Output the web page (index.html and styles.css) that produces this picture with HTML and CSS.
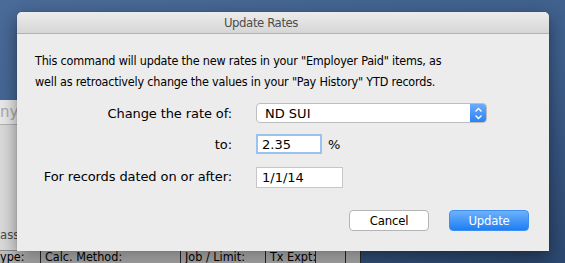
FILE: index.html
```html
<!DOCTYPE html>
<html>
<head>
  <title>Update Rates</title>
  <link rel="stylesheet" href="styles.css">
</head>
<body>
  <div class="desktop">
    <div class="back-window">
      <div class="search-row">
        <span class="search-hint">ny</span>
      </div>
      <div class="back-body">
        <span class="back-label">ass</span>
      </div>
      <div class="header-row">
        <div class="col col-first">ype:</div>
        <div class="col">Calc. Method:</div>
        <div class="col">Job / Limit:</div>
        <div class="col">Tx Expt:</div>
        <div class="col"></div>
        <div class="col"></div>
      </div>
    </div>

    <div class="dialog">
      <div class="titlebar">Update Rates</div>
      <div class="dialog-body">
        <p class="message">This command will update the new rates in your "Employer Paid" items, as<br>
          well as retroactively change the values in your "Pay History" YTD records.</p>

        <div class="form">
          <label for="rateItem">Change the rate of:</label>
          <div class="select-box" id="rateItem">
            <span class="select-value">ND SUI</span>
            <span class="select-arrows">
              <svg width="9" height="13" viewBox="0 0 9 13">
                <path d="M1.5 4.5 L4.5 1.5 L7.5 4.5 M1.5 8.5 L4.5 11.5 L7.5 8.5" fill="none" stroke="#fff" stroke-width="1.3"/>
              </svg>
            </span>
          </div>

          <label for="newRate">to:</label>
          <div class="field-row">
            <input class="text-field rate-field focused" id="newRate" value="2.35">
            <span class="unit">%</span>
          </div>

          <label for="fromDate">For records dated on or after:</label>
          <div class="field-row">
            <input class="text-field date-field" id="fromDate" value="1/1/14">
          </div>
        </div>

        <div class="buttons">
          <button class="btn">Cancel</button>
          <button class="btn btn-default">Update</button>
        </div>
      </div>
    </div>
  </div>
</body>
</html>
```

FILE: styles.css
```css
body {
  margin: 0;
  padding: 0;
  font-family: 'DejaVu Sans', sans-serif;
  font-size: 13px;
  color: #000;
}

.desktop {
  position: relative;
  width: 565px;
  height: 263px;
  overflow: hidden;
  background: linear-gradient(160deg, #4a6b98 0%, #3e5f8c 55%, #2c4870 100%);
}

/* window sitting behind the sheet */
.back-window {
  position: absolute;
  left: 0;
  top: 100px;
  width: 361px;
  height: 163px;
  display: flex;
  flex-direction: column;
  background: #e6e6e6;
}

.search-row {
  height: 24px;
  border-bottom: 1px solid #b4b4b4;
  background: #e9e9e9;
}

.search-hint {
  font-size: 15px;
  line-height: 24px;
  color: #a9a9a9;
}

.back-body {
  flex: 1;
  background: linear-gradient(90deg, #dadada, #c9c9c9);
  display: flex;
  align-items: flex-end;
}

.back-label {
  margin-bottom: 8px;
  font-family: 'DejaVu Sans Condensed', 'DejaVu Sans', sans-serif;
  font-size: 13px;
  color: #4a4a4a;
}

.header-row {
  height: 12px;
  display: grid;
  grid-template-columns: 41px 140px 85px 50px 30px 15px;
  background: linear-gradient(#c4c4c4, #a9a9a9);
  border-top: 1px solid #8a8a8a;
}

.col {
  border-right: 1px solid #2a2a2a;
  padding-left: 4px;
  font-family: 'DejaVu Sans Condensed', 'DejaVu Sans', sans-serif;
  font-size: 12.5px;
  line-height: 12px;
  white-space: nowrap;
}

.col-first {
  padding-left: 0;
}

/* the sheet */
.dialog {
  position: absolute;
  left: 17px;
  top: 12px;
  width: 532px;
  height: 239px;
  display: flex;
  flex-direction: column;
  background: #ececec;
  border-radius: 5px 5px 0 0;
  box-shadow: 0 6px 18px rgba(0, 0, 0, 0.45), 0 0 1px rgba(0, 0, 0, 0.4);
}

.titlebar {
  height: 21px;
  line-height: 21px;
  padding-right: 44px;
  text-align: center;
  font-family: 'DejaVu Sans Condensed', 'DejaVu Sans', sans-serif;
  font-size: 13px;
  letter-spacing: -0.4px;
  color: #4d4d4d;
  background: linear-gradient(#ececec, #d6d6d6);
  border-bottom: 1px solid #b1b1b1;
  border-radius: 5px 5px 0 0;
}

.dialog-body {
  padding: 16px 20px 20px 18px;
}

.message {
  margin: 0;
  font-family: 'DejaVu Sans Condensed', 'DejaVu Sans', sans-serif;
  font-size: 12.5px;
  letter-spacing: -0.2px;
  line-height: 21px;
  white-space: nowrap;
}

.form {
  display: grid;
  grid-template-columns: 197px auto;
  column-gap: 24px;
  row-gap: 11px;
  align-items: center;
  margin-top: 11px;
}

.form label {
  text-align: right;
  letter-spacing: -0.1px;
}

.select-box {
  width: 229px;
  height: 18px;
  display: flex;
  background: #fff;
  border: 1px solid #bdbdbd;
  border-radius: 4px;
  overflow: hidden;
}

.select-value {
  flex: 1;
  padding-left: 8px;
  line-height: 19px;
}

.select-arrows {
  width: 16px;
  display: flex;
  align-items: center;
  justify-content: center;
  background: linear-gradient(#6aacfb, #2a83f4);
}

.field-row {
  display: flex;
  align-items: center;
}

.text-field {
  box-sizing: border-box;
  height: 21px;
  padding: 0 0 0 5px;
  font-family: 'DejaVu Sans', sans-serif;
  font-size: 13px;
  background: #fff;
  border: 1px solid #c6c6c6;
  outline: none;
}

.rate-field {
  width: 66px;
  height: 20px;
}

.focused {
  border: 2px solid #9cc2ee;
  padding-left: 4px;
}

.date-field {
  width: 87px;
  margin-top: 2px;
}

.unit {
  margin-left: 6px;
}

.buttons {
  display: flex;
  justify-content: flex-end;
  gap: 20px;
  margin-top: 22px;
}

.btn {
  width: 80px;
  height: 21px;
  padding: 0;
  font-family: 'DejaVu Sans Condensed', 'DejaVu Sans', sans-serif;
  font-size: 13px;
  letter-spacing: -0.2px;
  color: #000;
  background: #fff;
  border: 1px solid #b4b4b4;
  border-radius: 4px;
}

.btn-default {
  color: #fff;
  background: linear-gradient(#6cb2fb, #1f7ef5);
  border-color: #3d8ff2;
}
```
